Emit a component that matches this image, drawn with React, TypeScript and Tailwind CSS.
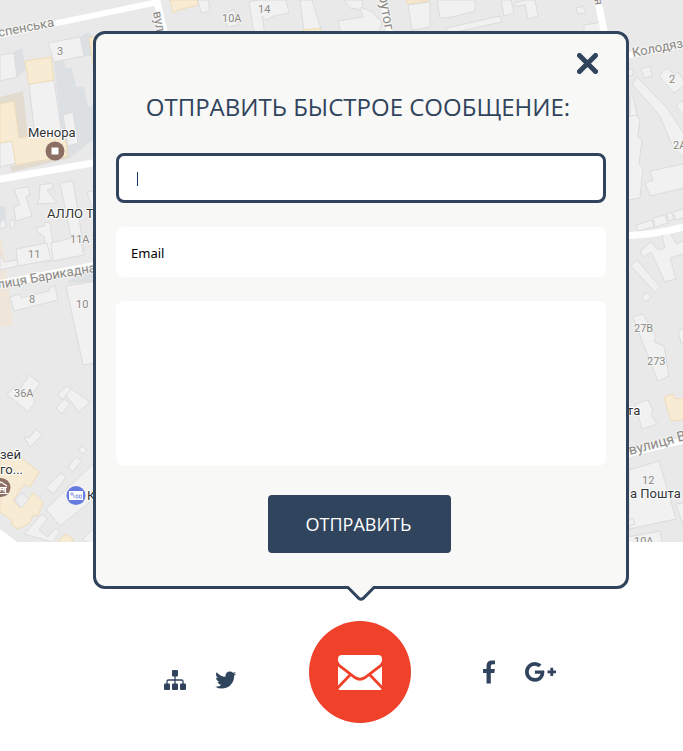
const shadows = [
  "14,52 22,48 26,70 17,77",
  "80,37 88,32 93,36 93,56 84,56",
  "54,62 64,60 66,68 72,68 76,87 84,87 88,107 110,104 110,126 70,158 62,135",
  "0,206 5,207 6,222 0,224",
  "66,283 84,270 110,268 110,281",
];

const sandShade = ["0,97 23,91 28,137 19,138 14,101 0,104", "54,134 66,140 70,158 12,172 10,166 62,156"];

const sand = [
  "25,61 51,57 54,80 29,84",
  "0,104 14,101 19,138 54,132 66,142 67,156 16,165 12,141 0,143",
  "170,0 173,13 178,10 198,5 197,0",
  "89,38 110,34 110,70 94,70",
  "303,31 303,30 320,28 322,40 303,40",
  "406,0 408,4 428,1 428,0",
  "0,462 11,450 39,472 30,487 24,484 13,501 20,508 33,493 43,502 38,516 33,515 30,523 18,529 11,524 12,520 0,512",
  "59,542 58,541 66,534 73,539 70,545",
  "664,397 673,394 675,399 700,396 700,418 671,421",
];

const buildings = [
  "0,55 14,53 17,77 0,81",
  "48,43 80,37 84,56 54,62",
  "29,84 54,80 62,135 35,138",
  "63,115 73,112 78,143 68,146",
  "0,143 12,141 16,163 0,167",
  "14,189 28,187 30,195 26,197 32,216 16,221 14,207 20,205",
  "40,185 52,183 53,188 47,190 57,203 37,204 39,199",
  "60,183 73,181 84,250 74,252",
  "87,192 110,188 110,210 93,212",
  "36,228 44,226 44,223 50,222 55,260 48,262 44,236 38,233",
  "51,243 79,236 84,255 53,261",
  "16,249 47,243 51,260 18,266",
  "0,254 4,262 17,260 18,266 0,270",
  "0,223 5,219 6,227 0,229",
  "10,221 14,219 15,226 10,229",
  "10,297 20,294 21,298 49,291 50,287 55,286 58,300 14,311",
  "66,286 110,279 110,361 83,365",
  "7,394 14,388 20,389 29,375 40,383 32,395 35,402 28,412",
  "65,394 70,388 90,402 79,412",
  "58,394 67,386 71,389 62,400",
  "56,408 64,399 70,403 62,414",
  "24,437 30,437 36,429 42,435 30,447",
  "78,450 82,446 87,450 83,454",
  "68,467 76,457 81,461 73,472",
  "46,488 61,473 66,477 54,494",
  "46,509 93,464 110,452 110,486 60,526",
  "24,534 42,514 47,519 39,530 48,537 55,528 60,532 52,542",
  "82,540 98,524 110,530 110,550",
  "198,0 208,0 210,11 201,13",
  "225,14 234,9 239,25 227,27",
  "249,2 258,0 286,0 289,13 274,16 266,20 262,16 265,35 254,35",
  "300,0 312,0 321,29 304,31",
  "344,0 362,0 363,10 350,8",
  "338,21 363,17 360,7 372,12 382,23 378,35 341,35",
  "408,5 430,2 430,27 412,30",
  "437,0 475,0 475,11 453,17 440,18",
  "501,0 511,0 514,13 504,16",
  "514,3 526,0 535,0 538,16 528,19 525,5 515,6",
  "446,28 500,16 502,22 447,34",
  "576,8 583,6 586,13 578,14",
  "584,25 602,22 603,35 584,35",
  "641,69 650,66 652,76 644,78",
  "620,71 633,69 633,75 620,80",
  "632,84 637,77 667,108 700,158 700,176 672,145 660,116",
  "659,76 667,68 675,75 678,72 686,84 674,93",
  "676,106 681,101 692,111 684,116",
  "630,96 633,96 640,129 630,132",
  "610,119 636,115 640,120 638,136 642,141 639,164 643,168 640,198 615,202",
  "645,183 653,180 650,171 683,164 700,160 700,184 650,196",
  "636,225 652,220 654,227 638,231",
  "653,218 665,215 668,223 655,227",
  "667,214 671,212 674,219 669,221",
  "673,212 700,204 700,213 676,220",
  "640,251 651,242 658,250 665,248 662,236 670,232 676,244 700,235 700,249 670,258 676,279 665,282 651,252 644,257",
  "631,266 637,260 660,287 655,292",
  "642,297 646,292 651,297 645,302",
  "633,317 643,314 656,337 654,342 664,346 669,376 658,381 647,353 644,346",
  "635,404 648,400 653,410 651,415 657,424 642,429",
  "629,470 659,461 676,519 629,529",
  "628,521 633,518 635,524 628,526",
  "628,537 660,531 662,543 628,545",
  "676,504 700,500 700,531 684,528",
  "678,330 700,326 700,340 681,343",
];

type LabelProps = { x: number; y: number; size?: number; turn?: number; dark?: boolean; children: string };

function MapLabel({ x, y, size = 11, turn = 0, dark = false, children }: LabelProps) {
  return (
    <text
      x={x}
      y={y}
      fontSize={size}
      transform={`rotate(${turn} ${x} ${y})`}
      className={dark ? "fill-[#333] stroke-white" : "fill-[#8b8984] stroke-[#f5f5f5]"}
      strokeWidth={2}
      strokeLinejoin="round"
      paintOrder="stroke"
    >
      {children}
    </text>
  );
}

function CityMap() {
  return (
    <svg
      className="absolute inset-x-0 top-0 h-[542px] w-full bg-[#e9e9e9] font-[Roboto,sans-serif]"
      viewBox="0 0 683 542"
      preserveAspectRatio="xMidYMin slice"
      role="img"
      aria-label="Карта"
    >
      <g fill="#dce0e2">{shadows.map((p) => <polygon key={p} points={p} />)}</g>
      <g fill="#e2dcd0">{sandShade.map((p) => <polygon key={p} points={p} />)}</g>
      <polygon points="0,238 2,240 6,270 13,325 0,327" fill="#efe5d8" />
      <g fill="#f1f1f1" stroke="#dcdcdc">{buildings.map((p) => <polygon key={p} points={p} />)}</g>
      <g fill="#f8ebd4" stroke="#efdcb8">{sand.map((p) => <polygon key={p} points={p} />)}</g>
      <polygon points="15,500 22,493 29,499 21,508" fill="#eee" stroke="#ddd" />
      <g stroke="#fff" fill="none">
        <path d="M-5 36L158 2" strokeWidth="6" />
        <path d="M156-3L166 40M597-3L606 40" strokeWidth="7" />
        <path d="M-5 180L110 160" strokeWidth="7" />
        <path d="M-5 285L110 263" strokeWidth="8" />
        <path d="M620 57L690 43" strokeWidth="6" />
        <path d="M620 236Q660 235 690 225" strokeWidth="7" />
        <path d="M620 456L690 439" strokeWidth="6" />
        <path d="M382-3L391 40" strokeWidth="6" />
      </g>
      <path d="M0 529L17 542H0z" fill="#fff" />
      <MapLabel x={-1} y={37} size={13} turn={-11}>спенська</MapLabel>
      <MapLabel x={153} y={12} size={13} turn={80}>вул</MapLabel>
      <MapLabel x={379} y={-4} size={14} turn={80}>рутог</MapLabel>
      <MapLabel x={594} y={-1} size={12} turn={80}>я</MapLabel>
      <MapLabel x={57} y={55}>3</MapLabel>
      <MapLabel x={222} y={22}>10А</MapLabel>
      <MapLabel x={258} y={13}>14</MapLabel>
      <MapLabel x={633} y={57} size={13} turn={-11}>Колодязна</MapLabel>
      <MapLabel x={669} y={83}>2</MapLabel>
      <MapLabel x={673} y={149}>2А</MapLabel>
      <MapLabel x={70} y={243}>11А -</MapLabel>
      <MapLabel x={28} y={258}>11</MapLabel>
      <MapLabel x={-2} y={289} size={13} turn={-10}>лиця Барикадна</MapLabel>
      <MapLabel x={29} y={303}>8</MapLabel>
      <MapLabel x={76} y={308}>10</MapLabel>
      <MapLabel x={14} y={397}>36А</MapLabel>
      <MapLabel x={634} y={332}>27В</MapLabel>
      <MapLabel x={647} y={365}>273</MapLabel>
      <MapLabel x={642} y={484}>12</MapLabel>
      <MapLabel x={634} y={545}>10А</MapLabel>
      <MapLabel x={630} y={455} size={14} turn={-15}>вулиця Ве</MapLabel>
      <MapLabel x={28} y={137} size={13} dark>Менора</MapLabel>
      <MapLabel x={47} y={218} size={13} dark>АЛЛО Ти</MapLabel>
      <MapLabel x={0} y={459} size={13} dark>зей</MapLabel>
      <MapLabel x={0} y={474} size={13} dark>го...</MapLabel>
      <MapLabel x={87} y={500} size={13} dark>К</MapLabel>
      <MapLabel x={627} y={415} size={13} dark>та</MapLabel>
      <MapLabel x={630} y={498} size={13} dark>а Пошта</MapLabel>
      <circle cx="55" cy="151" r="9.5" fill="#8d6e63" />
      <path d="M51.500 147.500h7v7h-7z" fill="#fff" />
      <circle cx="1" cy="487.500" r="9.500" fill="#8d6e63" />
      <path d="M-4 486l5-4 6 4M-4 487.500H7M-2 488v5M5.500 488v5M-4 493.500H8M0 492v-4l2 2 2-2v4" fill="none" stroke="#fff" strokeWidth="1.200" />
      <circle cx="76" cy="495.500" r="9.500" fill="#667bdf" />
      <path d="M69 491h14v9H69z" fill="#fff" />
      <path d="M71 493h2v2h-2zM74 495v3M76 495h2v3h-2zM79.500 495h2v3h-2z" fill="none" stroke="#7b8be4" strokeWidth=".8" />
    </svg>
  );
}

function SitemapIcon() {
  return (
    <svg className="h-5 w-[22px]" viewBox="0 0 22 20" fill="currentColor" aria-hidden="true">
      <rect x="8" width="6" height="6.500" rx="1" />
      <rect y="13.500" width="6" height="6.500" rx="1" />
      <rect x="8" y="13.500" width="6" height="6.500" rx="1" />
      <rect x="16" y="13.500" width="6" height="6.500" rx="1" />
      <path d="M11 6v8M3 14v-2.500q0-1.500 1.500-1.500h13q1.500 0 1.500 1.500V14" fill="none" stroke="currentColor" strokeWidth="1.300" />
    </svg>
  );
}

function TwitterIcon() {
  return (
    <svg className="h-6 w-6" viewBox="0 0 1684 1792" fill="currentColor" aria-hidden="true">
      <path d="M1684 408q-67 98-162 167 1 14 1 42 0 130-38 259.500t-115.500 248.500-184.500 210.500-258 146-323 54.500q-271 0-496-145 35 4 78 4 225 0 401-138-105-2-188-64.500t-114-159.500q33 5 61 5 43 0 85-11-112-23-185.500-111.500t-73.500-205.500v-4q68 38 146 41-66-44-105-115t-39-154q0-88 44-163 121 149 294.500 238.500t371.500 99.500q-8-38-8-74 0-134 94.500-228.500t228.500-94.500q140 0 236 102 109-21 205-78-37 115-142 178 93-10 186-50z" />
    </svg>
  );
}

function FacebookIcon() {
  return (
    <svg className="h-6 w-3" viewBox="479 0 864 1664" fill="currentColor" aria-hidden="true">
      <path d="M1343 12v264h-157q-86 0-116 36t-30 108v189h293l-39 296h-254v759h-306v-759h-255v-296h255v-218q0-186 104-288.500t277-102.500q147 0 228 12z" />
    </svg>
  );
}

function GooglePlusIcon() {
  return (
    <svg className="h-5 w-[31px]" viewBox="0 180 2304 1450" fill="currentColor" aria-hidden="true">
      <path d="M1437 913q0 208-87 370.500t-248 254-369 91.500q-149 0-285-58t-234-156-156-234-58-285 58-285 156-234 234-156 285-58q286 0 491 192l-199 191q-117-113-292-113-123 0-227.500 62t-165.500 168.500-61 232.500 61 232.500 165.500 168.500 227.500 62q83 0 152.500-23t114.500-57.500 78.500-78.500 49-83 21.500-74h-416v-252h692q12 63 12 122zM2304 791v210h-209v209h-210v-209h-209v-210h209v-209h210v209h209z" />
    </svg>
  );
}

function EnvelopeIcon() {
  return (
    <svg className="h-[35px] w-11" viewBox="0 0 44 35" aria-hidden="true">
      <path d="M4 0H40Q44 0 44 4V33Q44 35 42 35H2Q0 35 0 33V4Q0 0 4 0Z" fill="#fff" />
      <path d="M-1 7Q0 10 3 12L17 22.500Q22 26 27 22.500L41 12Q44 10 45 7M13 19L-1 33.500M31 19L45 33.500" fill="none" stroke="#f0412a" strokeWidth="2.800" />
    </svg>
  );
}

export default function App() {
  return (
    <main className="relative min-h-screen overflow-hidden bg-white pt-[31px] pb-7 pl-[39px] font-['Open_Sans','Noto_Sans',sans-serif] text-[#31445d]">
      <CityMap />
      <div className="relative mx-auto w-full max-w-[536px]">
        <section className="relative rounded-xl border-3 border-[#31445d] bg-[#f8f8f6] px-5 pt-[19px] pb-[33px]">
          <div className="flex justify-end pr-2">
            <button type="button" aria-label="Закрыть" className="cursor-pointer">
              <svg className="h-[21px] w-[21px]" viewBox="0 0 21 21" fill="none" stroke="currentColor" strokeWidth="5" strokeLinecap="round" aria-hidden="true">
                <path d="M2.500 2.500l16 16M18.500 2.500l-16 16" />
              </svg>
            </button>
          </div>
          <h1 className="mt-[15px] pr-1.5 text-center text-2xl leading-9">ОТПРАВИТЬ БЫСТРОЕ СООБЩЕНИЕ:</h1>
          <form className="mt-7 flex flex-col gap-6" onSubmit={(e) => e.preventDefault()}>
            <div className="relative">
              <input
                type="text"
                aria-label="Имя"
                className="block h-[50px] w-full rounded-lg border-3 border-[#31445d] bg-white px-[18px] text-sm text-black outline-none"
              />
              <span className="pointer-events-none absolute top-[19px] left-[21px] h-3.5 w-px bg-[#123c66]" />
            </div>
            <input
              type="email"
              aria-label="Email"
              placeholder="Email"
              className="block h-[50px] w-full rounded-lg bg-white px-[15px] pt-0.5 font-['Noto_Sans',sans-serif] text-[13px] text-black outline-none placeholder:text-black"
            />
            <textarea
              aria-label="Сообщение"
              className="block h-[165px] w-full resize-none rounded-lg bg-white p-4 text-sm text-black outline-none"
            />
            <button
              type="submit"
              className="mt-[5px] mr-[3px] h-[58px] w-[183px] cursor-pointer self-center rounded bg-[#31445d] pr-0.5 text-lg text-white"
            >
              ОТПРАВИТЬ
            </button>
          </form>
          <svg className="absolute top-full left-1/2 h-[15px] w-[30px] -translate-x-1/2" viewBox="0 0 30 15" aria-hidden="true">
            <path d="M0 0H30V1.500H28L17 12.500Q15 14 13 12.500L2 1.500H0z" fill="#f8f8f6" />
            <path d="M0 1.500H2L13 12.500Q15 14 17 12.500L28 1.500H30" fill="none" stroke="#31445d" strokeWidth="3" />
          </svg>
        </section>
        <nav aria-label="Контакты" className="mt-8 flex items-center justify-center gap-[72px] pr-[3px]">
          <div className="flex items-center gap-[27px] pt-4">
            <a href="#sitemap" aria-label="Карта сайта"><SitemapIcon /></a>
            <a href="#twitter" aria-label="Twitter"><TwitterIcon /></a>
          </div>
          <a href="#message" aria-label="Написать сообщение" className="flex h-[102px] w-[102px] items-center justify-center rounded-full bg-[#f0412a]">
            <EnvelopeIcon />
          </a>
          <div className="flex items-center gap-[30px]">
            <a href="#facebook" aria-label="Facebook"><FacebookIcon /></a>
            <a href="#google-plus" aria-label="Google Plus"><GooglePlusIcon /></a>
          </div>
        </nav>
      </div>
    </main>
  );
}
